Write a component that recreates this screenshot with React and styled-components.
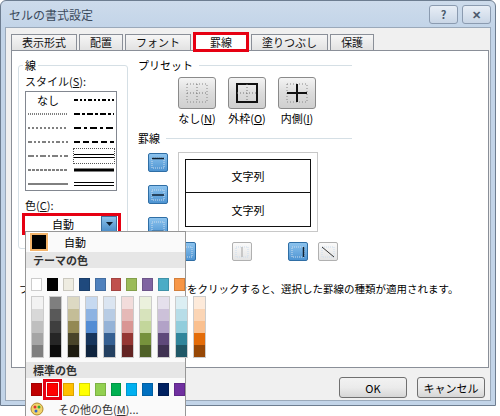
import React from "react";
import styled, { createGlobalStyle } from "styled-components";

const Global = createGlobalStyle`
  body { margin: 0; background: #fff; font-family: "Noto Sans CJK JP", "Noto Sans", sans-serif; }
`;

const Root = styled.div`
  position: relative;
  width: 500px;
  height: 416px;
  overflow: hidden;
  background: #fff;
`;

const Window = styled.div`
  width: 494px;
  height: 404px;
  border: 1px solid #6d7d90;
  border-radius: 6px 6px 0 0;
  background: linear-gradient(#cddbeb, #c2d4e8 28px, #c2d4e8);
  display: flex;
  flex-direction: column;
`;

const TitleBar = styled.div`
  height: 26px;
  display: flex;
  align-items: center;
  padding: 0 4px 0 8px;
  font-size: 12px;
  color: #3b4a5c;
`;

const Title = styled.span`
  flex: 1;
`;

const CapBtn = styled.div`
  width: 27px;
  height: 17px;
  margin-left: 4px;
  border: 1px solid #8b9bb0;
  border-radius: 3px;
  background: linear-gradient(#e8eef6, #c9d6e6);
  font-size: 11px;
  color: #4b5a6c;
  display: flex;
  align-items: center;
  justify-content: center;
  font-weight: bold;
`;

const Body = styled.div`
  flex: 1;
  margin: 0 4px 4px 4px;
  background: #f0f0f0;
  border: 1px solid #9aa9ba;
  padding: 4px 4px 0 5px;
  display: flex;
  flex-direction: column;
`;

const TabRow = styled.div`
  display: flex;
  align-items: flex-end;
  height: 18px;
  position: relative;
  z-index: 1;
`;

const Tab = styled.div`
  height: ${(p) => (p.active ? "20px" : "16px")};
  padding: 0 ${(p) => (p.active ? "14px" : "10px")};
  margin-right: 2px;
  box-sizing: border-box;
  border: ${(p) => (p.active ? "3px solid #e60012" : "1px solid #8a8f98")};
  border-bottom: ${(p) => (p.active ? "3px solid #e60012" : "none")};
  background: ${(p) => (p.active ? "#fff" : "linear-gradient(#f6f6f6, #e2e2e2)")};
  font-size: 11px;
  line-height: ${(p) => (p.active ? "14px" : "15px")};
  color: #111;
  margin-bottom: ${(p) => (p.active ? "-2px" : "0")};
`;

const Panel = styled.div`
  width: 478px;
  height: 318px;
  background: #fff;
  border: 1px solid #8a8f98;
  box-sizing: border-box;
  padding: 6px 6px 0 6px;
  display: flex;
  flex-direction: column;
`;

const Top = styled.div`
  display: flex;
  gap: 10px;
`;

const Group = styled.fieldset`
  width: 109px;
  height: 192px;
  box-sizing: border-box;
  margin: 0;
  padding: 0 6px;
  border: 1px solid #d5dfe5;
  border-radius: 3px;
  font-size: 11px;
`;

const Legend = styled.legend`
  padding: 0 2px;
  margin-left: -2px;
  font-size: 11px;
`;

const Label = styled.div`
  font-size: 11px;
  color: #111;
  margin: ${(p) => p.m || "0"};
`;

const StyleBox = styled.div`
  width: 92px;
  height: 100px;
  border: 1px solid #828790;
  box-sizing: border-box;
  display: grid;
  grid-template-columns: 1fr 1fr;
  grid-auto-rows: 14px;
  padding: 1px 2px;
  column-gap: 6px;
`;

const LineCell = styled.div`
  display: flex;
  align-items: center;
  justify-content: center;
  font-size: 11px;
  outline: ${(p) => (p.sel ? "1px dotted #555" : "none")};
`;

const ColorBox = styled.div`
  width: 99px;
  height: 22px;
  box-sizing: border-box;
  border: 3px solid #e60012;
  display: flex;
  align-items: center;
  background: #fff;
  font-size: 11px;
  margin-left: -3px;
`;

const ColorText = styled.span`
  flex: 1;
  text-align: center;
`;

const DropBtn = styled.div`
  width: 14px;
  height: 14px;
  margin-right: 1px;
  background: linear-gradient(#8bc1ea, #4d8fc9);
  border: 1px solid #3c6e9c;
  display: flex;
  align-items: center;
  justify-content: center;
`;

const Right = styled.div`
  flex: 1;
  display: flex;
  flex-direction: column;
`;

const SectionHead = styled.div`
  display: flex;
  align-items: center;
  gap: 6px;
  font-size: 11px;
  margin-top: ${(p) => p.mt || 0}px;
  &::after {
    content: "";
    flex: 1;
    border-top: 1px solid #d5dfe5;
    margin-right: 130px;
  }
`;

const PresetRow = styled.div`
  display: flex;
  gap: 12px;
  margin: 4px 0 0 40px;
`;

const PresetItem = styled.div`
  display: flex;
  flex-direction: column;
  align-items: center;
  font-size: 11px;
  gap: 1px;
  white-space: nowrap;
  width: 38px;
`;

const PresetBtn = styled.div`
  width: 38px;
  height: 32px;
  box-sizing: border-box;
  border: 1px solid #8a8a8a;
  border-radius: 3px;
  background: linear-gradient(#f4f4f4, #dcdcdc 50%, #cfcfcf);
  display: flex;
  align-items: center;
  justify-content: center;
`;

const BorderArea = styled.div`
  display: flex;
  gap: 10px;
  margin: 6px 0 0 10px;
`;

const SideCol = styled.div`
  display: flex;
  flex-direction: column;
  gap: 13px;
  padding-top: 1px;
`;

const IconBtn = styled.div`
  width: 20px;
  height: 19px;
  box-sizing: border-box;
  border: 1px solid ${(p) => (p.on ? "#2f6ea5" : "#b0b0b0")};
  border-radius: 2px;
  background: ${(p) =>
    p.on ? "linear-gradient(#8cc3ee, #4e94d2)" : "linear-gradient(#fafafa, #e4e4e4)"};
  display: flex;
  align-items: center;
  justify-content: center;
`;

const Preview = styled.div`
  width: 140px;
  height: 80px;
  box-sizing: border-box;
  border: 1px solid #c8c8c8;
  padding: 6px;
`;

const Cells = styled.div`
  height: 100%;
  border: 1px solid #111;
  display: grid;
  grid-template-rows: 1fr 1fr;
`;

const Cell = styled.div`
  display: flex;
  align-items: center;
  justify-content: center;
  font-size: 11px;
  border-bottom: ${(p) => (p.first ? "1px solid #111" : "none")};
`;

const BottomRow = styled.div`
  display: flex;
  margin: 6px 0 0 38px;
  width: 162px;
  justify-content: space-between;
`;

const BottomGroup = styled.div`
  display: flex;
  gap: 10px;
`;

const Hint = styled.div`
  font-size: 10.5px;
  margin: 20px 0 0 1px;
  white-space: nowrap;
`;

const Footer = styled.div`
  display: flex;
  justify-content: flex-end;
  gap: 10px;
  padding: 9px 1px 0 0;
`;

const Button = styled.div`
  width: 68px;
  height: 21px;
  box-sizing: border-box;
  border: 1px solid #707070;
  border-radius: 3px;
  background: linear-gradient(#f2f2f2, #ebebeb 50%, #d6d6d6);
  font-size: 11px;
  display: flex;
  align-items: center;
  justify-content: center;
`;

/* color dropdown popup, lies over the dialog */
const Popup = styled.div`
  position: absolute;
  left: 25px;
  top: 231px;
  width: 161px;
  height: 190px;
  background: #fafafa;
  border: 1px solid #979797;
  box-sizing: border-box;
  display: flex;
  flex-direction: column;
  font-size: 11px;
`;

const AutoRow = styled.div`
  display: flex;
  align-items: center;
  height: 20px;
  padding: 0 4px;
  gap: 16px;
`;

const AutoSwatch = styled.div`
  width: 14px;
  height: 14px;
  background: #000;
  border: 2px solid #f4b46a;
  outline: 1px solid #fff;
`;

const Band = styled.div`
  background: #e6e6e6;
  font-weight: bold;
  color: #333;
  padding: 0 7px;
  height: 16px;
  line-height: 16px;
  margin: ${(p) => p.m || "0"};
`;

const SwatchRow = styled.div`
  display: flex;
  gap: 5px;
  padding: 0 0 0 5px;
  margin: ${(p) => p.m || "0"};
`;

const Swatch = styled.div`
  width: 11px;
  height: 11px;
  background: ${(p) => p.c};
  border: 1px solid ${(p) => (p.c === "#FFFFFF" ? "#ccc" : "rgba(0,0,0,0.15)")};
  outline: ${(p) => (p.sel ? "3px solid #e60012" : "none")};
  outline-offset: 1px;
`;

const ShadeCol = styled.div`
  display: flex;
  flex-direction: column;
  border: 1px solid #ccc;
`;

const Shade = styled.div`
  width: 11px;
  height: 12px;
  background: ${(p) => p.c};
`;

const MoreRow = styled.div`
  display: flex;
  align-items: center;
  gap: 14px;
  padding: 0 4px;
  margin-top: 3px;
  height: 22px;
  color: #333;
  white-space: nowrap;
`;

const theme = ["#FFFFFF", "#000000", "#EEECE1", "#1F497D", "#4F81BD", "#C0504D", "#9BBB59", "#8064A2", "#4BACC6", "#F79646"];
const shades = [
  ["#F2F2F2", "#D8D8D8", "#BFBFBF", "#A5A5A5", "#7F7F7F"],
  ["#7F7F7F", "#595959", "#3F3F3F", "#262626", "#0C0C0C"],
  ["#DDD9C3", "#C4BD97", "#938953", "#494429", "#1D1B10"],
  ["#C6D9F0", "#8DB3E2", "#548DD4", "#17365D", "#0F243E"],
  ["#DBE5F1", "#B8CCE4", "#95B3D7", "#366092", "#244061"],
  ["#F2DCDB", "#E5B9B7", "#D99694", "#953734", "#632423"],
  ["#EBF1DD", "#D7E3BC", "#C3D69B", "#76923C", "#4F6128"],
  ["#E5E0EC", "#CCC1D9", "#B2A2C7", "#5F497A", "#3F3151"],
  ["#DBEEF3", "#B7DDE8", "#92CDDC", "#31859B", "#205867"],
  ["#FDEADA", "#FBD5B5", "#FAC08F", "#E36C09", "#974806"],
];
const standard = ["#C00000", "#FF0000", "#FFC000", "#FFFF00", "#92D050", "#00B050", "#00B0F0", "#0070C0", "#002060", "#7030A0"];

const Line = ({ dash, w = 1, double }) => (
  <svg width="40" height="6">
    {double ? (
      <>
        <line x1="0" y1="1.5" x2="40" y2="1.5" stroke="#000" strokeWidth="1" />
        <line x1="0" y1="4.5" x2="40" y2="4.5" stroke="#000" strokeWidth="1" />
      </>
    ) : (
      <line x1="0" y1="3" x2="40" y2="3" stroke="#000" strokeWidth={w} strokeDasharray={dash} />
    )}
  </svg>
);

const Grid = ({ outer, inner, color = "#777" }) => (
  <svg width="24" height="22">
    <rect x="2" y="2" width="20" height="18" fill="none" stroke={outer ? "#111" : "#888"} strokeWidth={outer ? 2 : 1} strokeDasharray={outer ? "" : "1 2"} />
    <line x1="12" y1="2" x2="12" y2="20" stroke={inner ? "#111" : color} strokeWidth={inner ? 2 : 1} strokeDasharray={inner ? "" : "1 2"} />
    <line x1="2" y1="11" x2="22" y2="11" stroke={inner ? "#111" : color} strokeWidth={inner ? 2 : 1} strokeDasharray={inner ? "" : "1 2"} />
  </svg>
);

const Mini = ({ h, v, diag, dark = "#123" }) => (
  <svg width="14" height="12">
    <rect x="1" y="1" width="12" height="10" fill="none" stroke="#cde" strokeWidth="1" strokeDasharray="1 1" />
    {h !== undefined && <line x1="1" y1={h} x2="13" y2={h} stroke={dark} strokeWidth="1.5" />}
    {v !== undefined && <line x1={v} y1="1" x2={v} y2="11" stroke={dark} strokeWidth="1.5" />}
    {diag && <line x1="1" y1="1" x2="13" y2="11" stroke="#333" strokeWidth="1" />}
  </svg>
);

export default function App() {
  return (
    <Root>
      <Global />
      <Window>
        <TitleBar>
          <Title>セルの書式設定</Title>
          <CapBtn>?</CapBtn>
          <CapBtn>✕</CapBtn>
        </TitleBar>
        <Body>
          <TabRow>
            <Tab>表示形式</Tab>
            <Tab>配置</Tab>
            <Tab>フォント</Tab>
            <Tab active>罫線</Tab>
            <Tab>塗りつぶし</Tab>
            <Tab>保護</Tab>
          </TabRow>
          <Panel>
            <Top>
              <Group>
                <Legend>線</Legend>
                <Label m="0 0 2px 0">スタイル(<u>S</u>):</Label>
                <StyleBox>
                  <LineCell>なし</LineCell>
                  <LineCell><Line dash="4 2 2 2 2 2" w={2} /></LineCell>
                  <LineCell><Line dash="1 1" /></LineCell>
                  <LineCell><Line dash="6 2 3 2" w={2} /></LineCell>
                  <LineCell><Line dash="2 2" /></LineCell>
                  <LineCell><Line dash="7 3 3 3" w={2} /></LineCell>
                  <LineCell><Line dash="4 2 2 2 2 2" /></LineCell>
                  <LineCell><Line dash="6 3" w={2} /></LineCell>
                  <LineCell><Line dash="6 2 2 2" /></LineCell>
                  <LineCell sel><Line double /></LineCell>
                  <LineCell><Line dash="3 1" /></LineCell>
                  <LineCell><Line w={3} /></LineCell>
                  <LineCell><Line /></LineCell>
                  <LineCell><Line double /></LineCell>
                </StyleBox>
                <Label m="6px 0 0 0">色(<u>C</u>):</Label>
                <ColorBox>
                  <ColorText>自動</ColorText>
                  <DropBtn>
                    <svg width="7" height="4"><path d="M0 0h7L3.5 4z" fill="#123" /></svg>
                  </DropBtn>
                </ColorBox>
              </Group>
              <Right>
                <SectionHead>プリセット</SectionHead>
                <PresetRow>
                  <PresetItem>
                    <PresetBtn><Grid /></PresetBtn>
                    <span>なし(<u>N</u>)</span>
                  </PresetItem>
                  <PresetItem>
                    <PresetBtn><Grid outer /></PresetBtn>
                    <span>外枠(<u>O</u>)</span>
                  </PresetItem>
                  <PresetItem>
                    <PresetBtn><Grid inner /></PresetBtn>
                    <span>内側(<u>I</u>)</span>
                  </PresetItem>
                </PresetRow>
                <SectionHead mt={4}>罫線</SectionHead>
                <BorderArea>
                  <SideCol>
                    <IconBtn on><Mini h={1.5} /></IconBtn>
                    <IconBtn on><Mini h={6} /></IconBtn>
                    <IconBtn on><Mini h={10.5} /></IconBtn>
                  </SideCol>
                  <Preview>
                    <Cells>
                      <Cell first>文字列</Cell>
                      <Cell>文字列</Cell>
                    </Cells>
                  </Preview>
                </BorderArea>
                <BottomRow>
                  <BottomGroup>
                    <IconBtn on><Mini v={1.5} /></IconBtn>
                  </BottomGroup>
                  <IconBtn><Mini v={7} dark="#bbb" /></IconBtn>
                  <BottomGroup>
                    <IconBtn on><Mini v={12.5} /></IconBtn>
                    <IconBtn><Mini diag /></IconBtn>
                  </BottomGroup>
                </BottomRow>
              </Right>
            </Top>
            <Hint>プリセットかプレビュー内のボタンをクリックすると、選択した罫線の種類が適用されます。</Hint>
          </Panel>
          <Footer>
            <Button>OK</Button>
            <Button>キャンセル</Button>
          </Footer>
        </Body>
      </Window>
      <Popup>
        <AutoRow>
          <AutoSwatch />
          自動
        </AutoRow>
        <Band m="0 0 10px 0">テーマの色</Band>
        <SwatchRow>
          {theme.map((c) => <Swatch key={c} c={c} />)}
        </SwatchRow>
        <SwatchRow m="5px 0 0 0">
          {shades.map((col, i) => (
            <ShadeCol key={i}>
              {col.map((c) => <Shade key={c} c={c} />)}
            </ShadeCol>
          ))}
        </SwatchRow>
        <Band m="4px 0 5px 0">標準の色</Band>
        <SwatchRow>
          {standard.map((c, i) => <Swatch key={c} c={c} sel={i === 1} />)}
        </SwatchRow>
        <MoreRow>
          <svg width="14" height="14">
            <circle cx="7" cy="7" r="6" fill="#f2d36b" stroke="#b08a2e" />
            <circle cx="5" cy="5" r="1.5" fill="#d33" />
            <circle cx="9" cy="5" r="1.5" fill="#3a3" />
            <circle cx="6" cy="9" r="1.5" fill="#36c" />
          </svg>
          <span>その他の色(<u>M</u>)...</span>
        </MoreRow>
      </Popup>
    </Root>
  );
}
